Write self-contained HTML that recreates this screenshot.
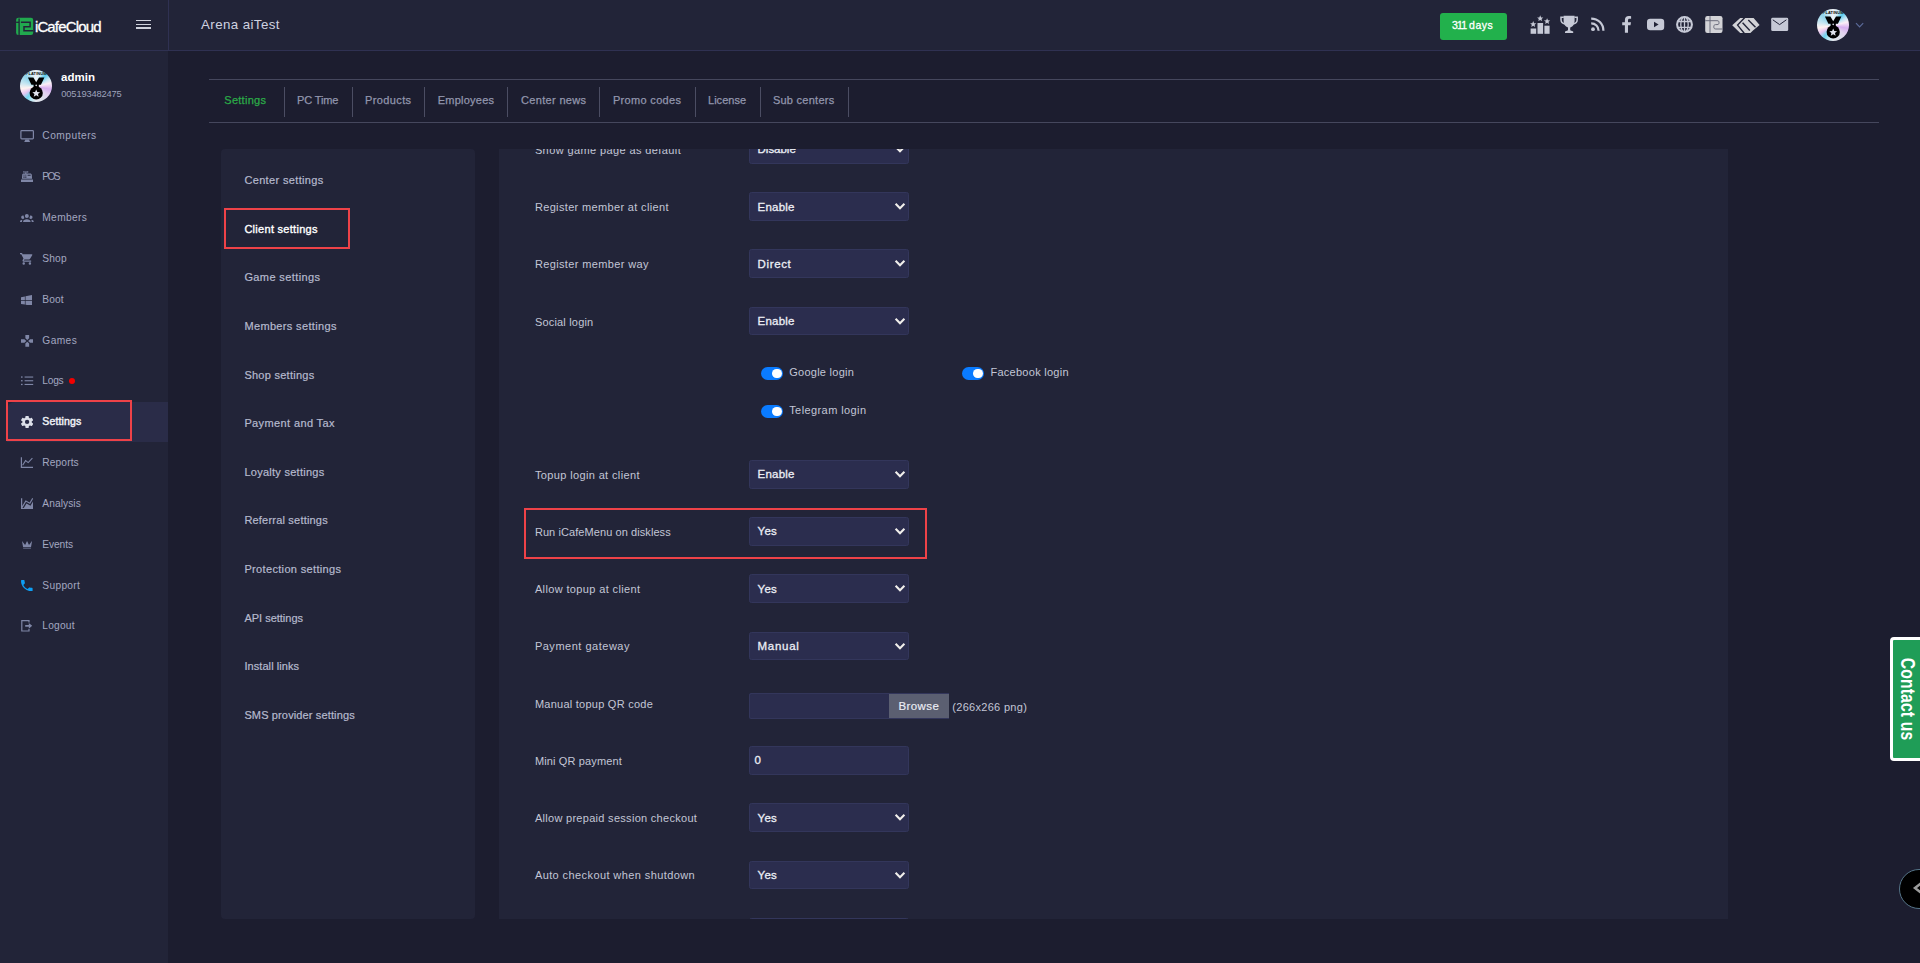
<!DOCTYPE html>
<html lang="en">
<head>
<meta charset="utf-8">
<title>iCafeCloud - Client settings</title>
<style>
*{box-sizing:border-box;margin:0;padding:0}
html,body{width:1920px;height:963px;overflow:hidden;background:#1c1d2f;font-family:"Liberation Sans",Arial,sans-serif}
.abs{position:absolute}
.t{position:absolute;white-space:pre;line-height:20px;height:20px;font-family:"Liberation Sans",Arial,sans-serif}
#header{position:absolute;left:0;top:0;width:1920px;height:51px;background:#222438;border-bottom:1px solid #2f3152}
#hdiv{position:absolute;left:168px;top:0;width:1px;height:50px;background:#2f3152}
#sidebar{position:absolute;left:0;top:51px;width:168px;height:912px;background:#222438}
#active{position:absolute;left:7px;top:402px;width:161px;height:40px;background:#2a2c48;border-top-left-radius:8px}
.redbox{position:absolute;border:2px solid #ee4248}
.hline{position:absolute;left:209px;width:1670px;height:1px;background:#45475d}
.vdiv{position:absolute;top:87px;width:1px;height:30px;background:#4b4d63}
#lpanel{position:absolute;left:221px;top:149px;width:254px;height:770px;background:#222438;border-radius:4px}
#rpanel{position:absolute;left:499px;top:149px;width:1229px;height:770px;background:#222438;overflow:hidden}
.sel{position:absolute;left:250px;width:160px;height:28.6px;background:#2b2d4e;border:1px solid #33365b;border-radius:2.5px}
.chev{position:absolute;left:394.5px}
.file{position:absolute;left:250px;width:200.3px;height:25.8px;background:#2b2d4e;box-shadow:inset 0 0 0 1px #33365b;border-radius:2.5px 0 0 2.5px;overflow:hidden}
.browse{position:absolute;right:0.5px;top:0.8px;width:60px;bottom:0.8px;background:#5b5f71}
.tog{position:absolute;width:22.6px;height:13px;border-radius:6.5px;background:#0a7bff}
.tog i{position:absolute;right:1.4px;top:1.6px;width:9.8px;height:9.8px;border-radius:50%;background:#fff}
#badge{position:absolute;left:1440px;top:12.8px;width:67px;height:27.2px;border-radius:3px;background:#22b14c}
#contact{position:absolute;left:1890px;top:636.6px;width:34px;height:124.6px;background:#1f9d57;border:3px solid #fff;border-radius:4px}
#contact span{position:absolute;left:14.1px;top:59.9px;transform:translate(-50%,-50%) rotate(90deg) scale(1,1.24);white-space:pre;font:bold 15.7px "Liberation Sans",Arial,sans-serif;color:#fff;letter-spacing:0.15px}
#fab{position:absolute;left:1899.2px;top:868.7px;width:40.7px;height:40.7px;border-radius:50%;background:#000;border:1px solid #557488}
.avatar{position:absolute;width:32px;height:32px;border-radius:50%;overflow:hidden}
</style>
</head>
<body>
<div id="header"></div>
<div id="hdiv"></div>
<div id="sidebar"></div>
<div id="active"></div>
<div class="redbox" style="left:6px;top:400px;width:126px;height:41px"></div>

<div class="hline" style="top:79px"></div>
<div class="hline" style="top:122px"></div>
<div class="vdiv" style="left:284px"></div>
<div class="vdiv" style="left:352px"></div>
<div class="vdiv" style="left:424px"></div>
<div class="vdiv" style="left:507px"></div>
<div class="vdiv" style="left:599px"></div>
<div class="vdiv" style="left:695px"></div>
<div class="vdiv" style="left:760px"></div>
<div class="vdiv" style="left:848px"></div>

<div id="lpanel"></div>
<div class="redbox" style="left:224px;top:208px;width:126px;height:41px"></div>

<div id="rpanel">
<div class="sel" style="top:-14px;height:28.5px"></div>
<svg class="chev" style="top:-4px" width="12" height="9" viewBox="0 0 12 9"><path d="M1.6 1.8 L6 6.2 L10.4 1.8" fill="none" stroke="#f1efec" stroke-width="2.1" stroke-linecap="butt" stroke-linejoin="miter"/></svg>
<div class="sel" style="top:43px;height:29px"></div>
<svg class="chev" style="top:53px" width="12" height="9" viewBox="0 0 12 9"><path d="M1.6 1.8 L6 6.2 L10.4 1.8" fill="none" stroke="#f1efec" stroke-width="2.1" stroke-linecap="butt" stroke-linejoin="miter"/></svg>
<div class="sel" style="top:100px;height:29px"></div>
<svg class="chev" style="top:110px" width="12" height="9" viewBox="0 0 12 9"><path d="M1.6 1.8 L6 6.2 L10.4 1.8" fill="none" stroke="#f1efec" stroke-width="2.1" stroke-linecap="butt" stroke-linejoin="miter"/></svg>
<div class="sel" style="top:158px;height:28px"></div>
<svg class="chev" style="top:168px" width="12" height="9" viewBox="0 0 12 9"><path d="M1.6 1.8 L6 6.2 L10.4 1.8" fill="none" stroke="#f1efec" stroke-width="2.1" stroke-linecap="butt" stroke-linejoin="miter"/></svg>
<div class="sel" style="top:311px;height:29px"></div>
<svg class="chev" style="top:321px" width="12" height="9" viewBox="0 0 12 9"><path d="M1.6 1.8 L6 6.2 L10.4 1.8" fill="none" stroke="#f1efec" stroke-width="2.1" stroke-linecap="butt" stroke-linejoin="miter"/></svg>
<div class="sel" style="top:368px;height:29px"></div>
<svg class="chev" style="top:378px" width="12" height="9" viewBox="0 0 12 9"><path d="M1.6 1.8 L6 6.2 L10.4 1.8" fill="none" stroke="#f1efec" stroke-width="2.1" stroke-linecap="butt" stroke-linejoin="miter"/></svg>
<div class="sel" style="top:425px;height:29px"></div>
<svg class="chev" style="top:435px" width="12" height="9" viewBox="0 0 12 9"><path d="M1.6 1.8 L6 6.2 L10.4 1.8" fill="none" stroke="#f1efec" stroke-width="2.1" stroke-linecap="butt" stroke-linejoin="miter"/></svg>
<div class="sel" style="top:483px;height:28px"></div>
<svg class="chev" style="top:493px" width="12" height="9" viewBox="0 0 12 9"><path d="M1.6 1.8 L6 6.2 L10.4 1.8" fill="none" stroke="#f1efec" stroke-width="2.1" stroke-linecap="butt" stroke-linejoin="miter"/></svg>
<div class="file" style="top:544px;height:26px"><div class="browse"></div></div>
<div class="sel" style="top:597px;height:29px"></div>
<div class="sel" style="top:654px;height:29px"></div>
<svg class="chev" style="top:664px" width="12" height="9" viewBox="0 0 12 9"><path d="M1.6 1.8 L6 6.2 L10.4 1.8" fill="none" stroke="#f1efec" stroke-width="2.1" stroke-linecap="butt" stroke-linejoin="miter"/></svg>
<div class="sel" style="top:712px;height:28px"></div>
<svg class="chev" style="top:722px" width="12" height="9" viewBox="0 0 12 9"><path d="M1.6 1.8 L6 6.2 L10.4 1.8" fill="none" stroke="#f1efec" stroke-width="2.1" stroke-linecap="butt" stroke-linejoin="miter"/></svg>
<div class="sel" style="top:769px;height:28px"></div>
<svg class="chev" style="top:779px" width="12" height="9" viewBox="0 0 12 9"><path d="M1.6 1.8 L6 6.2 L10.4 1.8" fill="none" stroke="#f1efec" stroke-width="2.1" stroke-linecap="butt" stroke-linejoin="miter"/></svg>
<span class="t" style="left:35.90px;top:-9px;font-size:11px;font-weight:400;color:#c3c6d6;letter-spacing:0.393px;">Show game page as default</span>
<span class="t" style="left:258.60px;top:-10px;font-size:11.5px;font-weight:400;color:#eceef5;letter-spacing:-0.027px;-webkit-text-stroke:0.3px #eceef5;">Disable</span>
<span class="t" style="left:35.90px;top:48px;font-size:11px;font-weight:400;color:#c3c6d6;letter-spacing:0.345px;">Register member at client</span>
<span class="t" style="left:258.60px;top:48px;font-size:11.5px;font-weight:400;color:#eceef5;letter-spacing:0.217px;-webkit-text-stroke:0.3px #eceef5;">Enable</span>
<span class="t" style="left:35.90px;top:105px;font-size:11px;font-weight:400;color:#c3c6d6;letter-spacing:0.368px;">Register member way</span>
<span class="t" style="left:258.60px;top:105px;font-size:11.5px;font-weight:400;color:#eceef5;letter-spacing:0.614px;-webkit-text-stroke:0.3px #eceef5;">Direct</span>
<span class="t" style="left:35.90px;top:163px;font-size:11px;font-weight:400;color:#c3c6d6;letter-spacing:0.185px;">Social login</span>
<span class="t" style="left:258.60px;top:162px;font-size:11.5px;font-weight:400;color:#eceef5;letter-spacing:0.217px;-webkit-text-stroke:0.3px #eceef5;">Enable</span>
<span class="t" style="left:35.90px;top:316px;font-size:11px;font-weight:400;color:#c3c6d6;letter-spacing:0.368px;">Topup login at client</span>
<span class="t" style="left:258.60px;top:315px;font-size:11.5px;font-weight:400;color:#eceef5;letter-spacing:0.217px;-webkit-text-stroke:0.3px #eceef5;">Enable</span>
<span class="t" style="left:35.90px;top:373px;font-size:11px;font-weight:400;color:#c3c6d6;letter-spacing:0.079px;">Run iCafeMenu on diskless</span>
<span class="t" style="left:258.60px;top:372px;font-size:11.5px;font-weight:400;color:#eceef5;letter-spacing:0.217px;-webkit-text-stroke:0.3px #eceef5;">Yes</span>
<span class="t" style="left:35.90px;top:430px;font-size:11px;font-weight:400;color:#c3c6d6;letter-spacing:0.368px;">Allow topup at client</span>
<span class="t" style="left:258.60px;top:430px;font-size:11.5px;font-weight:400;color:#eceef5;letter-spacing:0.217px;-webkit-text-stroke:0.3px #eceef5;">Yes</span>
<span class="t" style="left:35.90px;top:487px;font-size:11px;font-weight:400;color:#c3c6d6;letter-spacing:0.512px;">Payment gateway</span>
<span class="t" style="left:258.60px;top:487px;font-size:11.5px;font-weight:400;color:#eceef5;letter-spacing:0.696px;-webkit-text-stroke:0.3px #eceef5;">Manual</span>
<span class="t" style="left:35.90px;top:545px;font-size:11px;font-weight:400;color:#c3c6d6;letter-spacing:0.250px;">Manual topup QR code</span>
<span class="t" style="left:35.90px;top:602px;font-size:11px;font-weight:400;color:#c3c6d6;letter-spacing:0.144px;">Mini QR payment</span>
<span class="t" style="left:255.60px;top:601px;font-size:11.5px;font-weight:400;color:#eceef5;letter-spacing:0.000px;-webkit-text-stroke:0.3px #eceef5;">0</span>
<span class="t" style="left:35.90px;top:659px;font-size:11px;font-weight:400;color:#c3c6d6;letter-spacing:0.294px;">Allow prepaid session checkout</span>
<span class="t" style="left:258.60px;top:659px;font-size:11.5px;font-weight:400;color:#eceef5;letter-spacing:0.217px;-webkit-text-stroke:0.3px #eceef5;">Yes</span>
<span class="t" style="left:35.90px;top:716px;font-size:11px;font-weight:400;color:#c3c6d6;letter-spacing:0.407px;">Auto checkout when shutdown</span>
<span class="t" style="left:258.60px;top:716px;font-size:11.5px;font-weight:400;color:#eceef5;letter-spacing:0.217px;-webkit-text-stroke:0.3px #eceef5;">Yes</span>
</div>
<div class="redbox" style="left:524px;top:508px;width:403px;height:51px"></div>

<div class="tog" style="left:760.6px;top:367px"><i></i></div>
<div class="tog" style="left:961.7px;top:367px"><i></i></div>
<div class="tog" style="left:760.6px;top:405px"><i></i></div>

<div id="badge"></div>
<div id="contact"><span>Contact us</span></div>
<div id="fab"><svg class="abs" style="left:12px;top:9.8px" width="16" height="18" viewBox="0 0 16 18"><path d="M12 2 L3 9 L12 16" fill="none" stroke="#9c9c9c" stroke-width="2.5"/></svg></div>

<svg class="abs" style="left:21.00px;top:171.10px" width="12.00" height="10.90" viewBox="2.000 3.000 20.000 18.000" preserveAspectRatio="none"><path fill="#7f86a6" d="M2,17H22V21H2V17M6.25,7H9V6H6V3H14V6H11V7H17.8C18.8,7 19.8,8 20,9L20.5,16H3.5L4.05,9C4.05,8 5.05,7 6.25,7M13,9V11H18V9H13M6,9V10H8V9H6M9,9V10H11V9H9M6,11V12H8V11H6M9,11V12H11V11H9M6,13V14H8V13H6M9,13V14H11V13H9M7,4V5H13V4H7Z"/></svg>
<svg class="abs" style="left:20.20px;top:214.10px" width="13.70" height="8.40" viewBox="0.000 5.500 24.000 14.500" preserveAspectRatio="none"><path fill="#7f86a6" d="M12,5.5A3.5,3.5 0 0,1 15.5,9A3.5,3.5 0 0,1 12,12.5A3.5,3.5 0 0,1 8.5,9A3.5,3.5 0 0,1 12,5.5M5,8C5.56,8 6.08,8.15 6.53,8.42C6.38,9.85 6.8,11.27 7.66,12.38C7.16,13.34 6.16,14 5,14A3,3 0 0,1 2,11A3,3 0 0,1 5,8M19,8A3,3 0 0,1 22,11A3,3 0 0,1 19,14C17.84,14 16.84,13.34 16.34,12.38C17.2,11.27 17.62,9.85 17.47,8.42C17.92,8.15 18.44,8 19,8M5.5,18.25C5.5,16.18 8.41,14.5 12,14.5C15.59,14.5 18.5,16.18 18.5,18.25V20H5.5V18.25M0,20V18.5C0,17.11 1.89,15.94 4.45,15.6C3.86,16.28 3.5,17.22 3.5,18.25V20H0M24,20H20.5V18.25C20.5,17.22 20.14,16.28 19.55,15.6C22.11,15.94 24,17.11 24,18.5V20Z"/></svg>
<svg class="abs" style="left:20.30px;top:253.00px" width="12.40" height="11.70" viewBox="1.000 2.000 20.000 20.000" preserveAspectRatio="none"><path fill="#7f86a6" d="M17,18C15.89,18 15,18.89 15,20A2,2 0 0,0 17,22A2,2 0 0,0 19,20C19,18.89 18.1,18 17,18M1,2V4H3L6.6,11.59L5.24,14.04C5.09,14.32 5,14.65 5,15A2,2 0 0,0 7,17H19V15H7.42A0.25,0.25 0 0,1 7.17,14.75C7.17,14.7 7.18,14.66 7.2,14.63L8.1,13H15.55C16.3,13 16.96,12.58 17.3,11.97L20.88,5.5C20.95,5.34 21,5.17 21,5A1,1 0 0,0 20,4H5.21L4.27,2M7,18C5.89,18 5,18.89 5,20A2,2 0 0,0 7,22A2,2 0 0,0 9,20C9,18.89 8.1,18 7,18Z"/></svg>
<svg class="abs" style="left:21.20px;top:294.60px" width="11.00" height="10.80" viewBox="3.000 3.000 17.000 19.000" preserveAspectRatio="none"><path fill="#7f86a6" d="M3,12V6.75L9,5.43V11.91L3,12M20,3V11.75L10,11.9V5.21L20,3M3,13L9,13.09V19.9L3,18.75V13M20,13.25V22L10,20.09V13.1L20,13.25Z"/></svg>
<svg class="abs" style="left:20.80px;top:335.00px" width="12.50" height="11.80" viewBox="2.000 2.000 20.000 20.000" preserveAspectRatio="none"><path fill="#7f86a6" d="M16.5,9L13.5,12L16.5,15H22V9M9,16.5V22H15V16.5L12,13.5M7.5,9H2V15H7.5L10.5,12M15,7.5V2H9V7.5L12,10.5L15,7.5Z"/></svg>
<svg class="abs" style="left:20.80px;top:415.80px" width="12.20" height="11.90" viewBox="2.271 2.000 19.454 20.000" preserveAspectRatio="none"><path fill="#dde0ea" d="M12,15.5A3.5,3.5 0 0,1 8.5,12A3.5,3.5 0 0,1 12,8.5A3.5,3.5 0 0,1 15.5,12A3.5,3.5 0 0,1 12,15.5M19.43,12.97C19.47,12.65 19.5,12.33 19.5,12C19.5,11.67 19.47,11.34 19.43,11L21.54,9.37C21.73,9.22 21.78,8.95 21.66,8.73L19.66,5.27C19.54,5.05 19.27,4.96 19.05,5.05L16.56,6.05C16.04,5.66 15.5,5.32 14.87,5.07L14.5,2.42C14.46,2.18 14.25,2 14,2H10C9.75,2 9.54,2.18 9.5,2.42L9.13,5.07C8.5,5.32 7.96,5.66 7.44,6.05L4.95,5.05C4.73,4.96 4.46,5.05 4.34,5.27L2.34,8.73C2.21,8.95 2.27,9.22 2.46,9.37L4.57,11C4.53,11.34 4.5,11.67 4.5,12C4.5,12.33 4.53,12.65 4.57,12.97L2.46,14.63C2.27,14.78 2.21,15.05 2.34,15.27L4.34,18.73C4.46,18.95 4.73,19.03 4.95,18.95L7.44,17.94C7.96,18.34 8.5,18.68 9.13,18.93L9.5,21.58C9.54,21.82 9.75,22 10,22H14C14.25,22 14.46,21.82 14.5,21.58L14.87,18.93C15.5,18.67 16.04,18.34 16.56,17.94L19.05,18.95C19.27,19.03 19.54,18.95 19.66,18.73L21.66,15.27C21.78,15.05 21.73,14.78 21.54,14.63L19.43,12.97Z"/></svg>
<svg class="abs" style="left:21.00px;top:497.80px" width="12.30" height="11.20" viewBox="2.000 2.450 20.000 18.550" preserveAspectRatio="none"><path fill="#7f86a6" d="M17.45,15.18L22,7.31V19L22,21H2V3H4V15.54L9.5,6L16,9.78L20.24,2.45L21.97,3.45L16.74,12.5L10.23,8.75L4.31,19H6.57L10.96,11.44L17.45,15.18Z"/></svg>
<svg class="abs" style="left:22.00px;top:540.80px" width="10.10" height="8.60" viewBox="3.000 5.000 18.000 15.000" preserveAspectRatio="none"><path fill="#7f86a6" d="M5,16L3,5L8.5,12L12,5L15.5,12L21,5L19,16H5M19,19A1,1 0 0,1 18,20H6A1,1 0 0,1 5,19V18H19V19Z"/></svg>
<svg class="abs" style="left:21.10px;top:580.00px" width="11.60" height="11.30" viewBox="3.000 3.000 18.000 18.000" preserveAspectRatio="none"><path fill="#0d9ff5" d="M6.62,10.79C8.06,13.62 10.38,15.94 13.21,17.38L15.41,15.18C15.69,14.9 16.08,14.82 16.43,14.93C17.55,15.3 18.75,15.5 20,15.5A1,1 0 0,1 21,16.5V20A1,1 0 0,1 20,21A17,17 0 0,1 3,4A1,1 0 0,1 4,3H7.5A1,1 0 0,1 8.5,4C8.5,5.25 8.7,6.45 9.07,7.57C9.18,7.92 9.1,8.31 8.82,8.59L6.62,10.79Z"/></svg>
<!-- sidebar outline icons -->
<svg class="abs" style="left:19px;top:128px" width="17" height="16" viewBox="19 128 17 16"><rect x="20.9" y="130.6" width="12.5" height="8.3" rx="0.8" fill="none" stroke="#7f86a6" stroke-width="1.2"/><path d="M25.4 139.5 h3.5 l1.2 2.4 h-5.9z" fill="#7f86a6"/></svg>
<svg class="abs" style="left:19px;top:374px" width="17" height="14" viewBox="19 374 17 14"><g fill="#7f86a6"><rect x="21" y="376.4" width="1.6" height="1.3"/><rect x="21" y="380.1" width="1.6" height="1.3"/><rect x="21" y="383.8" width="1.6" height="1.3"/><rect x="24.6" y="376.5" width="8.6" height="1.1"/><rect x="24.6" y="380.2" width="8.6" height="1.1"/><rect x="24.6" y="383.9" width="8.6" height="1.1"/></g></svg>
<svg class="abs" style="left:19px;top:455px" width="17" height="15" viewBox="19 455 17 15"><path d="M21.4 457.2 V467.4 H33" fill="none" stroke="#7f86a6" stroke-width="1.2"/><path d="M22.6 465.2 L25.6 460.6 L28.2 462.6 L32.4 458.2" fill="none" stroke="#7f86a6" stroke-width="1.1"/></svg>
<svg class="abs" style="left:19px;top:618px" width="17" height="16" viewBox="19 618 17 16"><path d="M29 622.6 V620.6 H21.8 V631 H29 V629" fill="none" stroke="#7f86a6" stroke-width="1.2"/><path d="M25.2 624.9 h3.6 v-2 l3.4 2.9 l-3.4 2.9 v-2 h-3.6z" fill="#7f86a6"/></svg>
<div class="abs" style="left:69px;top:377.9px;width:6.3px;height:6.3px;border-radius:50%;background:#f20000"></div>

<!-- logo -->
<svg class="abs" style="left:15px;top:16px" width="22" height="22" viewBox="15 16 22 22">
<rect x="16.1" y="17.8" width="17.1" height="17.2" rx="2.2" fill="#21a94e"/>
<g fill="none" stroke="#222438" stroke-width="1.3">
<path d="M19.1 18.6 V35"/><path d="M16.1 22.3 H19.1"/>
<path d="M20.9 22.2 H30.1 V26.7 H24 V30.7 H33.2" stroke-width="1.5"/>
</g></svg>
<!-- hamburger -->
<div class="abs" style="left:136px;top:19.7px;width:15px;height:1.7px;background:#cfd2dc"></div>
<div class="abs" style="left:136px;top:23.5px;width:15px;height:1.7px;background:#cfd2dc"></div>
<div class="abs" style="left:136px;top:27.3px;width:15px;height:1.7px;background:#cfd2dc"></div>

<!-- header icons -->
<svg class="abs" style="left:1525px;top:10px" width="270" height="30" viewBox="1525 10 270 30">
<g fill="#c6c9d6">
<!-- ranking -->
<rect x="1530.6" y="28.5" width="5.6" height="5.3"/><rect x="1537.5" y="23" width="5.6" height="10.8"/><rect x="1544.4" y="25.7" width="5.2" height="8.1"/>
<path id="st" d="M0 -3.1 L0.9 -1 L3.1 -0.9 L1.4 0.5 L1.9 2.7 L0 1.5 L-1.9 2.7 L-1.4 0.5 L-3.1 -0.9 L-0.9 -1Z" transform="translate(1533.2 24.2)"/>
<path d="M0 -3.1 L0.9 -1 L3.1 -0.9 L1.4 0.5 L1.9 2.7 L0 1.5 L-1.9 2.7 L-1.4 0.5 L-3.1 -0.9 L-0.9 -1Z" transform="translate(1540.2 18.4)"/>
<path d="M0 -3.1 L0.9 -1 L3.1 -0.9 L1.4 0.5 L1.9 2.7 L0 1.5 L-1.9 2.7 L-1.4 0.5 L-3.1 -0.9 L-0.9 -1Z" transform="translate(1547.1 21.3)"/>
<!-- trophy -->
<path d="M1563.6 15.8 H1574.6 V20.5 C1574.6 25 1572 27.6 1569.1 27.6 C1566.2 27.6 1563.6 25 1563.6 20.5Z"/>
<path d="M1568 27 H1570.2 V30.2 L1573.2 31.6 V33 H1565 V31.6 L1568 30.2Z"/>
<!-- facebook -->
<path d="M1628 32.8 V25.2 H1630.5 L1631 22.2 H1628 V20.4 C1628 19.4 1628.4 18.8 1629.6 18.8 H1631.1 V16.2 C1630.6 16.1 1629.7 16 1628.8 16 C1626.4 16 1624.9 17.4 1624.9 20 V22.2 H1622.2 V25.2 H1624.9 V32.8Z"/>
<!-- youtube -->
<rect x="1647" y="18.7" width="17.2" height="11.6" rx="3.2"/>
<!-- iC logo -->
<rect x="1705.2" y="16.1" width="17.3" height="16.8" rx="2.2" fill="#d3d3d7"/>
<!-- S logo -->
<path fill="#d3d3d7" d="M1732.2 25.2 L1740.2 17.9 H1753.6 L1759.6 25 L1753 30.4 L1750.4 33 H1740.2Z"/>
<!-- mail -->
<rect x="1771.2" y="17.8" width="17" height="13.3" rx="1.4"/>
</g>
<g fill="none" stroke="#c6c9d6">
<!-- trophy handles -->
<path d="M1563.8 17.3 H1561 V19.5 C1561 22 1562.8 23.6 1565 24" stroke-width="1.5"/>
<path d="M1574.4 17.3 H1577.2 V19.5 C1577.2 22 1575.4 23.6 1573.2 24" stroke-width="1.5"/>
<!-- rss -->
<path d="M1591.2 18.6 C1598.2 18.6 1603.4 23.8 1603.4 30.8" stroke-width="2.2"/>
<path d="M1591.2 23.4 C1595.4 23.4 1598.6 26.6 1598.6 30.8" stroke-width="2.2"/>
<!-- globe -->
<circle cx="1684.5" cy="24.4" r="7.4" stroke-width="2.1"/>
<ellipse cx="1684.5" cy="24.4" rx="3.7" ry="7.5" stroke-width="1.3"/>
<path d="M1677.2 21.5 H1692 M1677.2 27.3 H1692 M1684.5 16.8 V32" stroke-width="1.3"/>
</g>
<circle cx="1593" cy="29.2" r="1.9" fill="#c6c9d6"/>
<!-- dark details -->
<path d="M1654 21.7 L1658.6 24.5 L1654 27.3Z" fill="#222438"/>
<g fill="none" stroke="#222438" stroke-width="1.3">
<path d="M1710 16.1 V32.9" stroke-width="1" stroke="#6a6c7c"/>
<path d="M1705.2 20.7 H1717 C1718.8 20.7 1719 21.4 1719 22.6 C1719 24 1718.6 24.6 1717 24.6 H1715.6 C1714.2 24.6 1713.8 25.4 1713.8 26.8 C1713.8 28.4 1714.4 29 1715.8 29 H1722.5" stroke-width="1" stroke="#6a6c7c"/>
<path d="M1744.8 17.6 L1737.6 25.1 L1744.2 33.2" stroke-width="1.4"/>
<path d="M1742.6 22.7 L1749.8 30.5" stroke-width="1.4"/>
<path d="M1748.3 20 L1755.5 27.2" stroke-width="1.4"/>
<path d="M1772.8 19.8 L1779.6 24.6 L1786.4 19.8" stroke-width="1"/>
</g>
<!-- chevron -->
</svg>
<svg class="abs" style="left:1853px;top:20px" width="14" height="10" viewBox="1853 20 14 10"><path d="M1856 23.2 L1859.6 26.8 L1863.2 23.2" fill="none" stroke="#5b6a99" stroke-width="1.2"/></svg>

<!-- avatars -->
<div class="abs" style="left:20px;top:70px;width:32px;height:32px;border-radius:50%;overflow:hidden;background:conic-gradient(from 0deg at 50% 52%,#eef0f5 0deg,#d6eef7 18deg,#58cbee 40deg,#bfe6f4 58deg,#fbeef6 76deg,#d5aef0 100deg,#e3d3f0 125deg,#dcdfea 150deg,#e4e7ee 180deg,#b9e6f2 200deg,#6fd6ee 218deg,#e6c6f0 240deg,#fff3f1 262deg,#c6e6f1 285deg,#8fd3ea 315deg,#cfeaf5 340deg,#eef0f5 360deg)">
<svg class="abs" style="left:0;top:0" width="32" height="32" viewBox="0 0 32 32">
<text x="16.2" y="5.3" text-anchor="middle" font-family="Liberation Sans, Arial, sans-serif" font-weight="bold" font-size="4" fill="#0a0a0a" letter-spacing="0.1">PLATINUM</text>
<path d="M7.9 7.5 H13.4 L16.2 12.2 L19 7.5 H24.4 L20.9 14.7 H11.4Z" fill="#000"/>
<path d="M13.6 14 H18.8 V18 H13.6Z" fill="#000"/>
<circle cx="16.2" cy="22.9" r="6.6" fill="#000"/>
<circle cx="16.2" cy="15.4" r="0.8" fill="#d8dbe6"/>
<path d="M16.2 19.4 L17.3 22 L20.1 22.2 L17.95 24 L18.65 26.8 L16.2 25.3 L13.75 26.8 L14.45 24 L12.3 22.2 L15.1 22Z" fill="#dfe2ec"/>
</svg></div>
<div class="abs" style="left:1817px;top:9px;width:32px;height:32px;border-radius:50%;overflow:hidden;background:conic-gradient(from 0deg at 50% 52%,#eef0f5 0deg,#d6eef7 18deg,#58cbee 40deg,#bfe6f4 58deg,#fbeef6 76deg,#d5aef0 100deg,#e3d3f0 125deg,#dcdfea 150deg,#e4e7ee 180deg,#b9e6f2 200deg,#6fd6ee 218deg,#e6c6f0 240deg,#fff3f1 262deg,#c6e6f1 285deg,#8fd3ea 315deg,#cfeaf5 340deg,#eef0f5 360deg)">
<svg class="abs" style="left:0;top:0" width="32" height="32" viewBox="0 0 32 32">
<text x="16.2" y="5.3" text-anchor="middle" font-family="Liberation Sans, Arial, sans-serif" font-weight="bold" font-size="4" fill="#0a0a0a" letter-spacing="0.1">PLATINUM</text>
<path d="M7.9 7.5 H13.4 L16.2 12.2 L19 7.5 H24.4 L20.9 14.7 H11.4Z" fill="#000"/>
<path d="M13.6 14 H18.8 V18 H13.6Z" fill="#000"/>
<circle cx="16.2" cy="22.9" r="6.6" fill="#000"/>
<circle cx="16.2" cy="15.4" r="0.8" fill="#d8dbe6"/>
<path d="M16.2 19.4 L17.3 22 L20.1 22.2 L17.95 24 L18.65 26.8 L16.2 25.3 L13.75 26.8 L14.45 24 L12.3 22.2 L15.1 22Z" fill="#dfe2ec"/>
</svg></div>

<span class="t" style="left:201.00px;top:15px;font-size:13.3px;font-weight:400;color:#cfd2e0;letter-spacing:0.416px;">Arena aiTest</span>
<span class="t" style="left:34.90px;top:17px;font-size:15px;font-weight:400;color:#ffffff;letter-spacing:-0.847px;-webkit-text-stroke:0.3px #fff;">iCafeCloud</span>
<span class="t" style="left:1452.10px;top:15px;font-size:10.5px;font-weight:400;color:#ffffff;letter-spacing:-0.875px;-webkit-text-stroke:0.3px #fff;">311</span>
<span class="t" style="left:1469.10px;top:15px;font-size:10.5px;font-weight:400;color:#ffffff;letter-spacing:0.504px;-webkit-text-stroke:0.3px #fff;">days</span>
<span class="t" style="left:61.00px;top:67px;font-size:11.5px;font-weight:700;color:#ffffff;letter-spacing:0.031px;">admin</span>
<span class="t" style="left:61.30px;top:84px;font-size:9.3px;font-weight:400;color:#9da2bb;letter-spacing:-0.141px;">005193482475</span>
<span class="t" style="left:42.30px;top:126px;font-size:10.2px;font-weight:400;color:#a2a7c0;letter-spacing:0.509px;">Computers</span>
<span class="t" style="left:42.30px;top:167px;font-size:10.2px;font-weight:400;color:#a2a7c0;letter-spacing:-1.608px;">POS</span>
<span class="t" style="left:42.30px;top:208px;font-size:10.2px;font-weight:400;color:#a2a7c0;letter-spacing:0.339px;">Members</span>
<span class="t" style="left:42.30px;top:249px;font-size:10.2px;font-weight:400;color:#a2a7c0;letter-spacing:0.168px;">Shop</span>
<span class="t" style="left:42.30px;top:290px;font-size:10.2px;font-weight:400;color:#a2a7c0;letter-spacing:0.077px;">Boot</span>
<span class="t" style="left:42.30px;top:331px;font-size:10.2px;font-weight:400;color:#a2a7c0;letter-spacing:0.414px;">Games</span>
<span class="t" style="left:42.30px;top:371px;font-size:10.2px;font-weight:400;color:#a2a7c0;letter-spacing:-0.231px;">Logs</span>
<span class="t" style="left:42.30px;top:411px;font-size:10.5px;font-weight:400;color:#eef0f6;letter-spacing:0.150px;-webkit-text-stroke:0.45px #eef0f6;">Settings</span>
<span class="t" style="left:42.30px;top:453px;font-size:10.2px;font-weight:400;color:#a2a7c0;letter-spacing:0.121px;">Reports</span>
<span class="t" style="left:42.30px;top:494px;font-size:10.2px;font-weight:400;color:#a2a7c0;letter-spacing:0.080px;">Analysis</span>
<span class="t" style="left:42.30px;top:535px;font-size:10.2px;font-weight:400;color:#a2a7c0;letter-spacing:-0.091px;">Events</span>
<span class="t" style="left:42.30px;top:576px;font-size:10.2px;font-weight:400;color:#a2a7c0;letter-spacing:0.319px;">Support</span>
<span class="t" style="left:42.30px;top:616px;font-size:10.2px;font-weight:400;color:#a2a7c0;letter-spacing:0.226px;">Logout</span>
<span class="t" style="left:224.30px;top:90px;font-size:11px;font-weight:400;color:#2bab48;letter-spacing:0.264px;-webkit-text-stroke:0.25px #2bab48;">Settings</span>
<span class="t" style="left:296.90px;top:90px;font-size:11px;font-weight:400;color:#9296ad;letter-spacing:-0.098px;-webkit-text-stroke:0.25px #9296ad;">PC Time</span>
<span class="t" style="left:365.10px;top:90px;font-size:11px;font-weight:400;color:#9296ad;letter-spacing:0.368px;-webkit-text-stroke:0.25px #9296ad;">Products</span>
<span class="t" style="left:437.70px;top:90px;font-size:11px;font-weight:400;color:#9296ad;letter-spacing:0.235px;-webkit-text-stroke:0.25px #9296ad;">Employees</span>
<span class="t" style="left:521.10px;top:90px;font-size:11px;font-weight:400;color:#9296ad;letter-spacing:0.323px;-webkit-text-stroke:0.25px #9296ad;">Center news</span>
<span class="t" style="left:612.90px;top:90px;font-size:11px;font-weight:400;color:#9296ad;letter-spacing:0.329px;-webkit-text-stroke:0.25px #9296ad;">Promo codes</span>
<span class="t" style="left:708.00px;top:90px;font-size:11px;font-weight:400;color:#9296ad;letter-spacing:0.030px;-webkit-text-stroke:0.25px #9296ad;">License</span>
<span class="t" style="left:772.90px;top:90px;font-size:11px;font-weight:400;color:#9296ad;letter-spacing:0.260px;-webkit-text-stroke:0.25px #9296ad;">Sub centers</span>
<span class="t" style="left:244.40px;top:170px;font-size:11px;font-weight:400;color:#b6bace;letter-spacing:0.351px;-webkit-text-stroke:0.2px #b6bace;">Center settings</span>
<span class="t" style="left:244.40px;top:219px;font-size:11px;font-weight:400;color:#ffffff;letter-spacing:0.286px;-webkit-text-stroke:0.35px #fff;">Client settings</span>
<span class="t" style="left:244.40px;top:267px;font-size:11px;font-weight:400;color:#b6bace;letter-spacing:0.390px;-webkit-text-stroke:0.2px #b6bace;">Game settings</span>
<span class="t" style="left:244.40px;top:316px;font-size:11px;font-weight:400;color:#b6bace;letter-spacing:0.352px;-webkit-text-stroke:0.2px #b6bace;">Members settings</span>
<span class="t" style="left:244.40px;top:365px;font-size:11px;font-weight:400;color:#b6bace;letter-spacing:0.262px;-webkit-text-stroke:0.2px #b6bace;">Shop settings</span>
<span class="t" style="left:244.40px;top:413px;font-size:11px;font-weight:400;color:#b6bace;letter-spacing:0.379px;-webkit-text-stroke:0.2px #b6bace;">Payment and Tax</span>
<span class="t" style="left:244.40px;top:462px;font-size:11px;font-weight:400;color:#b6bace;letter-spacing:0.265px;-webkit-text-stroke:0.2px #b6bace;">Loyalty settings</span>
<span class="t" style="left:244.40px;top:510px;font-size:11px;font-weight:400;color:#b6bace;letter-spacing:0.200px;-webkit-text-stroke:0.2px #b6bace;">Referral settings</span>
<span class="t" style="left:244.40px;top:559px;font-size:11px;font-weight:400;color:#b6bace;letter-spacing:0.339px;-webkit-text-stroke:0.2px #b6bace;">Protection settings</span>
<span class="t" style="left:244.40px;top:608px;font-size:11px;font-weight:400;color:#b6bace;letter-spacing:-0.009px;-webkit-text-stroke:0.2px #b6bace;">API settings</span>
<span class="t" style="left:244.40px;top:656px;font-size:11px;font-weight:400;color:#b6bace;letter-spacing:0.075px;-webkit-text-stroke:0.2px #b6bace;">Install links</span>
<span class="t" style="left:244.40px;top:705px;font-size:11px;font-weight:400;color:#b6bace;letter-spacing:0.135px;-webkit-text-stroke:0.2px #b6bace;">SMS provider settings</span>
<span class="t" style="left:789.20px;top:362px;font-size:11px;font-weight:400;color:#c3c6d6;letter-spacing:0.265px;">Google login</span>
<span class="t" style="left:990.40px;top:362px;font-size:11px;font-weight:400;color:#c3c6d6;letter-spacing:0.276px;">Facebook login</span>
<span class="t" style="left:789.20px;top:400px;font-size:11px;font-weight:400;color:#c3c6d6;letter-spacing:0.412px;">Telegram login</span>
<span class="t" style="left:898.40px;top:696px;font-size:11.5px;font-weight:400;color:#eceef5;letter-spacing:0.408px;-webkit-text-stroke:0.15px #eceef5;">Browse</span>
<span class="t" style="left:952.30px;top:697px;font-size:11px;font-weight:400;color:#c3c6d6;letter-spacing:0.296px;">(266x266 png)</span>
</body>
</html>
